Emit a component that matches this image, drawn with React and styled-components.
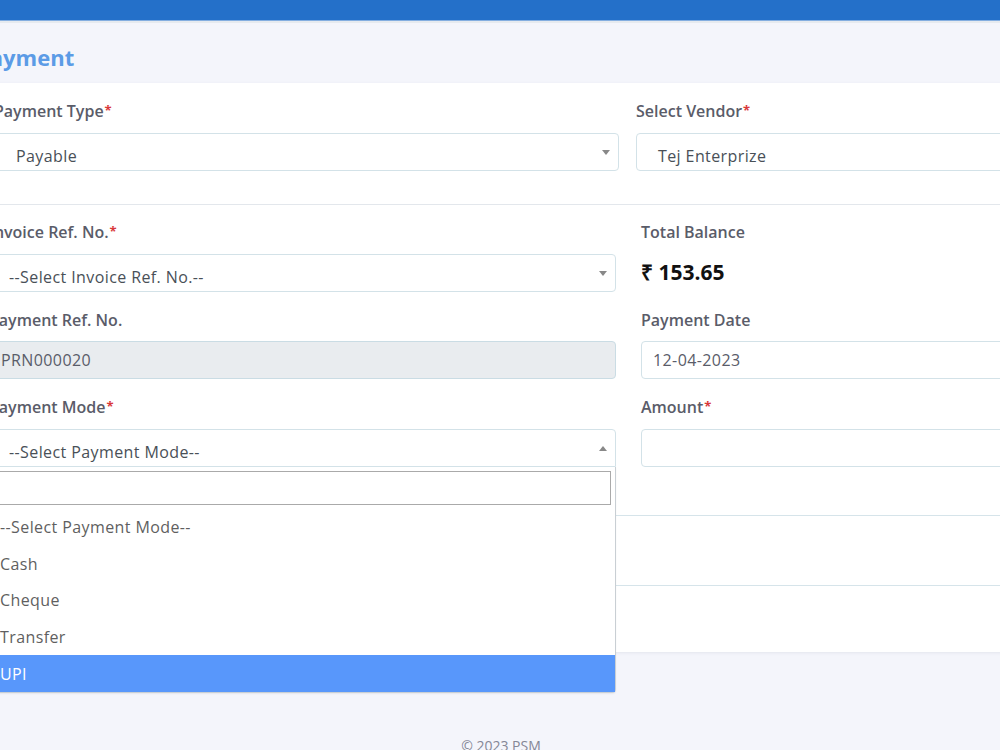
import React from "react";
import styled, { createGlobalStyle } from "styled-components";

const GlobalStyle = createGlobalStyle`
  html, body {
    margin: 0;
    padding: 0;
    overflow: hidden;
    background: #f4f5fb;
    font-family: "Open Sans", "Liberation Sans", sans-serif;
  }
  * { box-sizing: border-box; }
`;

const TopBar = styled.div`
  height: 21px;
  background: #2470c9;
  border-bottom: 1px solid #84aee0;
  box-shadow: 0 2px 0 #e6eaef;
`;

const HeaderBand = styled.div`
  height: 60px;
  margin-top: 2px;
  margin-left: -24px;
  padding-top: 7px;
  display: flex;
  align-items: center;
  background: #f4f5fb;
`;

const Title = styled.h1`
  margin: 0;
  font-size: 22px;
  font-weight: 700;
  color: #5b9be6;
`;

const Card = styled.div`
  position: relative;
  margin-left: -11px;
  width: 1400px;
  background: #ffffff;
  box-shadow: 0 1px 3px rgba(40, 50, 80, 0.08);
`;

const Section = styled.div`
  display: grid;
  grid-template-columns: ${(p) => p.$col}px ${(p) => p.$col}px;
  column-gap: ${(p) => p.$gap}px;
  row-gap: 17px;
  padding: ${(p) => p.$pad};
  border-bottom: 1px solid ${(p) => p.$line || "#e3e7ec"};
  min-height: ${(p) => p.$minH || 0}px;
`;

const Field = styled.div`
  position: relative;
  display: flex;
  flex-direction: column;
`;

const Label = styled.label`
  font-size: 16px;
  line-height: 22px;
  font-weight: 600;
  color: #5a5c69;
  margin-bottom: 10px;
  white-space: nowrap;
`;

const Req = styled.span`
  color: #d9383a;
  font-size: 13px;
  font-weight: 700;
  position: relative;
  top: -2px;
  margin-left: 1px;
`;

const SelectBox = styled.div`
  position: relative;
  height: 38px;
  display: flex;
  align-items: center;
  padding-left: ${(p) => p.$padL}px;
  padding-top: 7px;
  border: 1px solid #d3e2e8;
  border-radius: ${(p) => (p.$open ? "4px 4px 0 0" : "4px")};
  background: #fff;
  font-size: 16px;
  letter-spacing: 0.4px;
  color: #495057;
  white-space: nowrap;
`;

const Arrow = styled.span`
  position: absolute;
  right: 8px;
  top: 50%;
  margin-top: -2px;
  width: 0;
  height: 0;
  border-left: 4px solid transparent;
  border-right: 4px solid transparent;
  ${(p) =>
    p.$up
      ? "border-bottom: 5px solid #888; border-top: none;"
      : "border-top: 5px solid #888; border-bottom: none;"}
`;

const Input = styled.div`
  height: 38px;
  display: flex;
  align-items: center;
  padding-left: 11px;
  border: 1px solid ${(p) => (p.$disabled ? "#cadce4" : "#d3e2e8")};
  border-radius: 4px;
  background: ${(p) => (p.$disabled ? "#e9ecef" : "#fff")};
  font-size: 16px;
  letter-spacing: 0.4px;
  color: #5a5c69;
`;

const Value = styled.div`
  height: 38px;
  display: flex;
  align-items: center;
  font-size: 21px;
  font-weight: 700;
  color: #111;
`;

const Dropdown = styled.div`
  position: absolute;
  left: -1px;
  right: -1px;
  top: calc(100% + 1px);
  z-index: 5;
  background: #fff;
  border: 1px solid #c9cfd4;
  border-top: none;
  border-radius: 0 0 4px 4px;
  box-shadow: 0 1px 2px rgba(0, 0, 0, 0.06);
  letter-spacing: 0.4px;
`;

const SearchWrap = styled.div`
  padding: 4px;
`;

const Search = styled.div`
  height: 34px;
  border: 1px solid #aaa;
`;

const OptionList = styled.ul`
  list-style: none;
  margin: 0;
  padding: 0;
`;

const Option = styled.li`
  height: 36.6px;
  display: flex;
  align-items: center;
  padding-left: 10px;
  font-size: 16px;
  color: ${(p) => (p.$active ? "#fff" : "#5f5f5f")};
  background: ${(p) => (p.$active ? "#5897fb" : "transparent")};
`;

const Footer = styled.footer`
  display: flex;
  justify-content: center;
  padding-top: 84px;
  font-size: 14px;
  color: #858796;
`;

const FooterText = styled.span`
  margin-left: 2px;
`;

export default function App() {
  const modes = ["--Select Payment Mode--", "Cash", "Cheque", "Transfer", "UPI"];
  return (
    <>
      <GlobalStyle />
      <TopBar />
      <HeaderBand>
        <Title>Payment</Title>
      </HeaderBand>
      <Card>
        <Section $col={625} $gap={17} $pad="17px 0 33px 5px">
          <Field>
            <Label>
              Payment Type<Req>*</Req>
            </Label>
            <SelectBox $padL={21}>
              Payable
              <Arrow />
            </SelectBox>
          </Field>
          <Field>
            <Label>
              Select Vendor<Req>*</Req>
            </Label>
            <SelectBox $padL={21}>Tej Enterprize</SelectBox>
          </Field>
        </Section>
        <Section $col={627} $gap={25} $pad="16px 0 48px 0" $line="#d6e4ea">
          <Field>
            <Label>
              Invoice Ref. No.<Req>*</Req>
            </Label>
            <SelectBox $padL={19}>
              --Select Invoice Ref. No.--
              <Arrow />
            </SelectBox>
          </Field>
          <Field>
            <Label>Total Balance</Label>
            <Value>₹ 153.65</Value>
          </Field>
          <Field>
            <Label>Payment Ref. No.</Label>
            <Input $disabled>PRN000020</Input>
          </Field>
          <Field>
            <Label>Payment Date</Label>
            <Input>12-04-2023</Input>
          </Field>
          <Field>
            <Label>
              Payment Mode<Req>*</Req>
            </Label>
            <SelectBox $padL={19} $open>
              --Select Payment Mode--
              <Arrow $up />
              <Dropdown>
                <SearchWrap>
                  <Search />
                </SearchWrap>
                <OptionList>
                  {modes.map((m) => (
                    <Option key={m} $active={m === "UPI"}>
                      {m}
                    </Option>
                  ))}
                </OptionList>
              </Dropdown>
            </SelectBox>
          </Field>
          <Field>
            <Label>
              Amount<Req>*</Req>
            </Label>
            <Input />
          </Field>
        </Section>
        <Section $col={627} $gap={25} $pad="0" $minH={70} $line="#d6e4ea" />
        <Section $col={627} $gap={25} $pad="0" $minH={66} $line="transparent" />
      </Card>
      <Footer>
        <FooterText>© 2023 PSM</FooterText>
      </Footer>
    </>
  );
}
